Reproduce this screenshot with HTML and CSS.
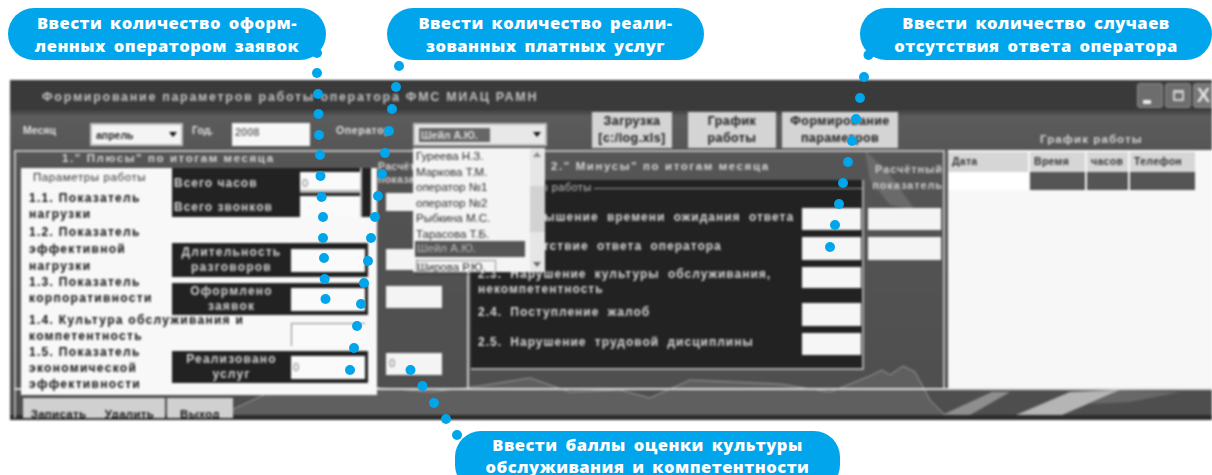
FILE: index.html
```html
<!DOCTYPE html>
<html lang="ru">
<head>
<meta charset="utf-8">
<title>Формирование параметров работы оператора</title>
<link rel="stylesheet" href="styles.css">
</head>
<body>
<div class="page">
  <header class="callouts">
    <div class="callout callout-a">Ввести количество оформ-<br>ленных оператором заявок</div>
    <div class="callout callout-b">Ввести количество реали-<br>зованных платных услуг</div>
    <div class="callout callout-c">Ввести количество случаев<br>отсутствия ответа оператора</div>
  </header>

  <main class="window">
    <svg class="backdrop" viewBox="0 0 1202 340" width="1202" height="340" aria-hidden="true">
      <path class="ridge" d="M200 340 L260 312 L340 305 L420 312 L470 306 L520 298 L560 312 L610 310 L640 318 L680 300 L770 304 L820 312 L860 296 L872 290 L880 295 L893 286 L905 292 L920 320 L940 340 Z"/>
      <path class="haze" d="M855 70 L880 95 L905 130 L880 125 L860 100 Z"/>
      <path class="streak" d="M932 335 L982 312 L1000 312 L960 335 Z"/>
      <path class="streak streak-bright" d="M1006 335 L1060 312 L1110 310 L1052 335 Z"/>
      <path class="haze" d="M1110 310 L1170 312 L1120 322 L1080 324 Z"/>
      <rect class="base-band" x="0" y="335" width="1202" height="5"/>
    </svg>

    <div class="titlebar">
      <span class="title-text">Формирование параметров работы оператора ФМС МИАЦ РАМН</span>
      <div class="win-buttons">
        <button class="win-btn"><span class="glyph-min"></span></button>
        <button class="win-btn"><span class="glyph-max"></span></button>
        <button class="win-btn win-close">X</button>
      </div>
    </div>

    <div class="toolbar">
      <span class="tool-label label-month">Месяц</span>
      <div class="combo combo-month"><span>апрель</span><i class="arrow"></i></div>
      <span class="tool-label label-year">Год.</span>
      <div class="year-input">2008</div>
      <span class="tool-label label-operator">Оператор</span>
      <div class="combo combo-operator"><span class="picked">Шейл А.Ю.</span><i class="arrow"></i></div>
      <button class="tool-btn btn-load">Загрузка<br>[c:/log.xls]</button>
      <button class="tool-btn btn-plan">График<br>работы</button>
      <button class="tool-btn btn-form">Формирование<br>параметров</button>
      <span class="plan-caption">График работы</span>
    </div>

    <div class="workspace">
      <div class="frame">
        <section class="plus">
          <h2 class="panel-title">1." Плюсы" по итогам месяца</h2>
          <div class="plus-sheet">
            <div class="params">
              <p class="params-head">Параметры работы</p>
              <p class="param p-11">1.1. Показатель<br>нагрузки</p>
              <p class="param p-12">1.2. Показатель<br>эффективной<br>нагрузки</p>
              <p class="param p-13">1.3. Показатель<br>корпоративности</p>
              <p class="param p-14">1.4. Культура обслуживания и<br>компетентность</p>
              <p class="param p-15">1.5. Показатель<br>экономической<br>эффективности</p>
            </div>
            <div class="values">
              <div class="black-box box-calls">
                <div class="box-row"><span>Всего часов</span><b class="field field-tall">0</b></div>
                <div class="box-row"><span>Всего звонков</span><b class="field field-tall"></b></div>
              </div>
              <div class="black-box box-talk">
                <span class="box-cap">Длительность<br>разговоров</span><b class="field"></b>
              </div>
              <div class="black-box box-orders">
                <span class="box-cap">Оформлено<br>заявок</span><b class="field"></b>
              </div>
              <div class="culture-row"><b class="field field-sunken"></b></div>
              <div class="black-box box-paid">
                <span class="box-cap">Реализовано<br>услуг</span><b class="field field-zero">0</b>
              </div>
            </div>
          </div>
        </section>

        <section class="calc calc-one">
          <h3 class="calc-title">Расчётный<br>показатель</h3>
          <b class="calc-field cf-1"></b>
          <b class="calc-field cf-2"></b>
          <b class="calc-field cf-3"></b>
          <b class="calc-field cf-4">0</b>
        </section>

        <section class="minus">
          <h2 class="panel-title minus-title">2." Минусы" по итогам месяца</h2>
          <div class="minus-group">
            <span class="legend">Параметры работы</span>
            <div class="m-row m-1"><span>2.1. Превышение времени ожидания ответа</span><b class="m-field"></b></div>
            <div class="m-row m-2"><span>2.2. Отсутствие ответа оператора</span><b class="m-field"></b></div>
            <div class="m-row m-3"><span>2.3. Нарушение культуры обслуживания,<br>некомпетентность</span><b class="m-field"></b></div>
            <div class="m-row m-4"><span>2.4. Поступление жалоб</span><b class="m-field"></b></div>
            <div class="m-row m-5"><span>2.5. Нарушение трудовой дисциплины</span><b class="m-field"></b></div>
          </div>
        </section>

        <section class="calc calc-two">
          <h3 class="calc-title">Расчётный<br>показатель</h3>
          <b class="calc-field cf-a"></b>
          <b class="calc-field cf-b"></b>
        </section>
      </div>

      <div class="schedule">
        <div class="sch-grid">
          <span class="sch-head">Дата</span>
          <span class="sch-head">Время</span>
          <span class="sch-head">часов</span>
          <span class="sch-head">Телефон</span>
          <span class="sch-cell sch-light"></span>
          <span class="sch-cell"></span>
          <span class="sch-cell"></span>
          <span class="sch-cell"></span>
        </div>
      </div>
    </div>

    <div class="actions">
      <div class="action-group">
        <button class="action-btn">Записать</button>
        <button class="action-btn">Удалить</button>
      </div>
      <button class="action-btn action-exit">Выход</button>
    </div>

    <ul class="droplist">
      <li>Гуреева Н.З.</li>
      <li>Маркова Т.М.</li>
      <li>оператор №1</li>
      <li>оператор №2</li>
      <li>Рыбкина М.С.</li>
      <li>Тарасова Т.Б.</li>
      <li class="current">Шейл А.Ю.</li>
      <li class="boxed">Широва Р.Ю.</li>
      <li class="scroll"><i class="up"></i><i class="thumb"></i><i class="down"></i></li>
    </ul>
  </main>

  <footer class="callouts-bottom">
    <div class="callout callout-d">Ввести баллы оценки культуры<br>обслуживания и компетентности</div>
  </footer>

  <svg class="dots" viewBox="0 0 1212 475" width="1212" height="475" aria-hidden="true">
    <g class="trail">
      <circle cx="317" cy="53" r="5"/><circle cx="317" cy="73" r="5"/><circle cx="318" cy="94" r="5"/><circle cx="318.500" cy="114" r="5"/><circle cx="319" cy="135" r="5"/><circle cx="320" cy="155" r="5"/><circle cx="320.500" cy="176" r="5"/><circle cx="321.600" cy="197" r="5"/><circle cx="323" cy="217" r="5"/><circle cx="323" cy="238" r="5"/><circle cx="324" cy="258" r="5"/><circle cx="324.700" cy="279" r="5"/><circle cx="325.500" cy="299" r="5"/>
      <circle cx="399" cy="66" r="5"/><circle cx="396" cy="87" r="5"/><circle cx="392" cy="109" r="5"/><circle cx="389" cy="131" r="5"/><circle cx="385" cy="153" r="5"/><circle cx="382" cy="174" r="5"/><circle cx="378" cy="196" r="5"/><circle cx="375" cy="217" r="5"/><circle cx="371" cy="238" r="5"/><circle cx="368" cy="261" r="5"/><circle cx="364" cy="283" r="5"/><circle cx="361" cy="304" r="5"/><circle cx="357" cy="326" r="5"/><circle cx="354" cy="348" r="5"/><circle cx="350" cy="370" r="5"/>
      <circle cx="868.500" cy="55" r="5"/><circle cx="864" cy="77" r="5"/><circle cx="860" cy="98" r="5"/><circle cx="856" cy="119" r="5"/><circle cx="852" cy="141" r="5"/><circle cx="848" cy="162" r="5"/><circle cx="843" cy="183" r="5"/><circle cx="839" cy="204" r="5"/><circle cx="835" cy="225" r="5"/><circle cx="830" cy="247" r="5"/>
      <circle cx="410.500" cy="370" r="5"/><circle cx="422.500" cy="386" r="5"/><circle cx="434" cy="403" r="5"/><circle cx="446" cy="419" r="5"/><circle cx="457" cy="435" r="5"/>
    </g>
  </svg>
</div>
</body>
</html>
```

FILE: styles.css
```css
* { box-sizing: border-box; }

html, body {
  margin: 0;
  padding: 0;
  background: #fff;
}

.page {
  position: relative;
  width: 1212px;
  height: 475px;
  overflow: hidden;
  font-family: "Liberation Sans", Arial, sans-serif;
}

/* Blue speech pills */
.callouts {
  display: flex;
  height: 60px;
  padding: 8px 0 0 8px;
}

.callout {
  height: 52px;
  border-radius: 26px;
  background: #00a5ec;
  color: #fff;
  font-family: "Open Sans", sans-serif;
  font-weight: 800;
  font-size: 16.500px;
  line-height: 23px;
  letter-spacing: .5px;
  word-spacing: 3px;
  text-align: center;
  padding-top: 3px;
  white-space: nowrap;
}

.callout-a { width: 318px; }
.callout-b { width: 317px; margin-left: 61px; }
.callout-c { width: 352px; margin-left: 156px; }

.callouts-bottom {
  padding: 11px 0 0 455px;
}

.callout-d {
  width: 385px;
  height: 60px;
  line-height: 22px;
}

.dots {
  position: absolute;
  top: 0;
  left: 0;
  pointer-events: none;
}

.trail circle { fill: #00a5ec; }

/* Application window */
.window {
  position: relative;
  width: 1202px;
  height: 340px;
  margin: 20px 0 0 10px;
  overflow: hidden;
  background: linear-gradient(#3a3a3a 0, #3a3a3a 30px, #5c5c5c 36px, #565656 70px, #4e4e4e 100%);
  filter: blur(.8px);
  font-size: 11px;
}

.backdrop {
  position: absolute;
  top: 0;
  left: 0;
}

.ridge {
  fill: #6a6a6a;
  fill-opacity: .6;
  stroke: #a8a8a8;
  stroke-width: .8;
}

.haze { fill: #7a7a7a; opacity: .6; }
.streak { fill: #9a9a9a; opacity: .85; }
.streak-bright { fill: #c8c8c8; }
.base-band { fill: #2c2c2c; }

.titlebar,
.toolbar,
.workspace,
.actions {
  position: relative;
}

.titlebar {
  display: flex;
  align-items: flex-start;
  justify-content: space-between;
  height: 32px;
  padding: 3px 0 0 32px;
  border-bottom: 1px solid #4c4c4c;
}

.title-text {
  margin-top: 7px;
  color: #c4c4c4;
  font-weight: 700;
  font-size: 12.500px;
  letter-spacing: 1.700px;
  white-space: nowrap;
}

.win-buttons {
  display: flex;
  gap: 2px;
  width: 75px;
}

.win-btn {
  flex: 0 0 26px;
  height: 25px;
  padding: 0;
  border: 1px solid #8e8e8e;
  border-radius: 3px;
  background: #6d6d6d;
  color: #e4e4e4;
  font: 700 20px "Liberation Sans", sans-serif;
  display: flex;
  justify-content: center;
  align-items: center;
}

.win-close { flex-basis: 21px; background: #777; }

.glyph-min {
  width: 8px;
  height: 4px;
  margin: 12px 6px 0 0;
  background: #eee;
}

.glyph-max {
  width: 11px;
  height: 11px;
  border: 2px solid #cfcfcf;
  border-top-width: 3px;
}

/* Controls row */
.toolbar {
  display: flex;
  align-items: flex-start;
  height: 38px;
  padding-left: 13px;
}

.tool-label {
  margin-top: 12px;
  color: #e2e2e2;
  font-weight: 700;
  font-size: 10.500px;
  white-space: nowrap;
}

.label-month { flex: 0 0 67px; }
.label-year { flex: 0 0 40px; margin-left: 9px; }
.label-operator { flex: 0 0 77px; margin-left: 26px; letter-spacing: .6px; }

.combo {
  display: flex;
  align-items: center;
  justify-content: space-between;
  height: 23px;
  margin-top: 11px;
  padding: 0 4px;
  background: #f4f4f4;
  border: 2px solid #bdbdbd;
  color: #222;
  font-size: 10.500px;
  font-weight: 700;
}

.combo-month { flex: 0 0 93px; }
.combo-operator { flex: 0 0 134px; background: #e8e8e8; }

.picked {
  background: #666;
  color: #ddd;
  padding: 1px 12px 1px 2px;
}

.arrow {
  width: 0;
  height: 0;
  border-left: 4px solid transparent;
  border-right: 4px solid transparent;
  border-top: 5px solid #111;
}

.year-input {
  flex: 0 0 78px;
  height: 23px;
  margin-top: 11px;
  padding: 3px 0 0 3px;
  background: #f7f7f7;
  color: #777;
  font-size: 11px;
  font-weight: 700;
}

.tool-btn {
  height: 36px;
  padding: 0;
  border: 0;
  background: #d4d4d4;
  color: #1c1c1c;
  font: 700 12.500px/17px "Liberation Sans", sans-serif;
  letter-spacing: .4px;
  white-space: nowrap;
}

.btn-load { flex: 0 0 80px; margin-left: 45px; }
.btn-plan { flex: 0 0 88px; margin-left: 16px; }
.btn-form { flex: 0 0 116px; margin-left: 6px; }

.plan-caption {
  margin: 21px 0 0 142px;
  color: #d6d6d6;
  font-weight: 700;
  font-size: 11.500px;
  letter-spacing: 1.100px;
  white-space: nowrap;
}

/* Main area */
.workspace {
  display: flex;
  height: 240px;
  margin-left: 4px;
  border-bottom: 2px solid #dedede;
}

.frame {
  display: flex;
  flex: 0 0 931px;
  height: 238px;
  border: 2px solid #b9b9b9;
  border-bottom: 0;
}

.plus {
  flex: 0 0 356px;
  min-width: 0;
  margin-left: 5px;
}

.panel-title {
  height: 16px;
  margin: 0;
  padding: 0 0 0 41px;
  color: #d8d8d8;
  font-size: 11.500px;
  font-weight: 700;
  letter-spacing: 1.600px;
  white-space: nowrap;
}

.plus-sheet {
  position: relative;
  display: flex;
  height: 227px;
  background: #f8f8f8;
}

.params {
  flex: 0 0 151px;
  min-width: 0;
  padding: 1px 0 0 8px;
  color: #111;
  font-size: 12px;
  font-weight: 700;
  line-height: 16px;
  letter-spacing: 1.300px;
  white-space: nowrap;
}

.params p { margin: 0; }

.params .params-head {
  padding-left: 4px;
  font-size: 11.500px;
  font-weight: 400;
  letter-spacing: .6px;
  color: #333;
}

.params .p-11 { margin-top: 5px; }
.params .p-12 { margin-top: 2px; line-height: 17px; }
.params .p-13 { line-height: 15.500px; }
.params .p-14 { margin-top: 6px; }

.values {
  flex: 1;
  min-width: 0;
  display: flex;
  flex-direction: column;
}

.black-box {
  display: flex;
  align-items: center;
  justify-content: space-between;
  width: 196px;
  background: #222;
  color: #d4d4d4;
  font-weight: 700;
  font-size: 12px;
  letter-spacing: 1px;
  padding-right: 3px;
}

.box-calls {
  display: block;
  width: 199px;
  height: 49px;
  padding: 4px 11px 0 0;
  background: linear-gradient(90deg, #222 0 188px, #bbb 188px 190px, #222 190px);
  white-space: nowrap;
}

.box-row {
  display: flex;
  justify-content: space-between;
  align-items: center;
  height: 21px;
  padding-left: 2px;
}

.box-row + .box-row {
  margin-top: 3px;
}

.box-row .field {
  border-bottom: 3px solid #b4b4b4;
}

.box-row + .box-row .field {
  border-bottom: 0;
}

.box-talk { height: 34px; margin-top: 26px; }
.box-orders { height: 32px; margin-top: 6px; }
.box-paid { height: 32px; margin-top: 6px; }

.box-cap {
  flex: 1;
  min-width: 0;
  text-align: center;
  line-height: 15px;
  font-size: 12px;
  letter-spacing: 1.200px;
  white-space: nowrap;
}

.field {
  display: block;
  flex: 0 0 74px;
  height: 23px;
  padding: 5px 0 0 2px;
  background: #fafafa;
  color: #777;
  font-weight: 400;
  font-size: 11px;
}

.field-tall { flex-basis: 60px; height: 21px; }

.culture-row {
  display: flex;
  justify-content: flex-end;
  width: 193px;
  height: 22px;
  margin-top: 8px;
}

.field-sunken {
  border-top: 1px solid #888;
  border-left: 1px solid #888;
}

/* Calculated columns */
.calc {
  position: relative;
  min-width: 0;
}

.calc-one {
  flex: 0 0 89px;
  margin-left: 3px;
  background: rgba(80, 80, 80, .55);
  border-right: 2px solid #c8c8c8;
}

.calc-two { flex: 0 0 79px; }

.calc-title {
  margin: 0;
  padding-top: 8px;
  color: #cfcfcf;
  font-size: 10.500px;
  line-height: 13px;
  letter-spacing: .3px;
  font-weight: 700;
  white-space: nowrap;
}

.calc-one .calc-title { margin-left: -2px; }

.calc-two .calc-title {
  padding: 9px 0 0 0;
  margin-left: -6px;
  line-height: 16px;
  font-size: 11px;
  letter-spacing: .9px;
  text-align: right;
}

.calc-field {
  display: block;
  height: 22px;
  background: #f4f4f4;
  color: #777;
  font-weight: 400;
  padding: 4px 0 0 3px;
}

.calc-one .calc-field { width: 56px; margin-left: 6px; }
.calc-two .calc-field { width: 73px; margin-left: 4px; }

.cf-1 { margin-top: 7px; height: 18px; }
.cf-2 { margin-top: 38px; height: 21px; }
.cf-3 { margin-top: 16px; }
.cf-4 { margin-top: 45px; }
.cf-a { margin-top: 15px; }
.cf-b { margin-top: 7px; height: 23px; }

/* Second panel */
.minus {
  flex: 0 0 393px;
  min-width: 0;
  margin-left: 2px;
}

.minus-title {
  height: 28px;
  padding: 8px 0 0 80px;
}

.minus-group {
  position: relative;
  height: 190px;
  padding-top: 28px;
  background: #222;
  border-right: 2px solid #a8a8a8;
  border-bottom: 2px solid #a8a8a8;
}

.minus-group::before {
  content: "";
  position: absolute;
  top: 8px;
  left: 4px;
  right: 0;
  height: 1px;
  background: #9a9a9a;
}

.legend {
  position: absolute;
  top: 1px;
  left: 12px;
  padding: 0 3px;
  background: #222;
  color: #c4c4c4;
  font-size: 11px;
  letter-spacing: .4px;
}

.m-row {
  display: flex;
  justify-content: space-between;
  align-items: flex-start;
  color: #d8d8d8;
  font-weight: 700;
  font-size: 12px;
  line-height: 15px;
  letter-spacing: 1px;
  word-spacing: 4px;
  padding-left: 7px;
  white-space: nowrap;
}

.m-row span { padding-top: 2px; min-width: 0; }
.m-3 span { padding-top: 0; }

.m-field {
  flex: 0 0 59px;
  height: 22px;
  margin-right: 1px;
  background: #f6f6f6;
}

.m-2, .m-3, .m-5 { margin-top: 7px; }
.m-4 { margin-top: 6px; }
.m-2 .m-field, .m-4 .m-field { height: 23px; }
.m-3 .m-field { height: 21px; }

/* Schedule grid */
.schedule {
  flex: 1;
  min-width: 0;
  margin-left: 3px;
  background: #f7f7f7;
  height: 238px;
}

.sch-grid {
  display: grid;
  grid-template-columns: 80px 55px 41px 65px;
  grid-template-rows: 20px 18px;
  column-gap: 2px;
  padding-top: 2px;
}

.sch-head {
  background: #d6d6d6;
  color: #333;
  font-size: 10.500px;
  font-weight: 700;
  letter-spacing: .3px;
  padding: 3px 0 0 4px;
  overflow: hidden;
  white-space: nowrap;
}

.sch-cell { background: #555; }
.sch-light { background: #fff; }

/* Bottom buttons */
.actions {
  display: flex;
  gap: 2px;
  height: 28px;
  margin-left: 4px;
  padding: 8px 0 0 7px;
  overflow: hidden;
  border-left: 2px solid #a8a8a8;
}

.action-group { display: flex; }

.action-btn {
  width: 71px;
  height: 26px;
  padding: 6px 0 0;
  border: 0;
  background: #d0d0d0;
  color: #111;
  font: 700 11.500px "Liberation Sans", sans-serif;
  letter-spacing: .3px;
  text-align: center;
  align-self: flex-start;
}

.action-exit { width: 66px; }

/* Open operator dropdown */
.droplist {
  position: absolute;
  top: 68px;
  left: 403px;
  width: 132px;
  height: 124px;
  margin: 0;
  padding: 1px 0 0 3px;
  list-style: none;
  background: #f4f4f4;
  color: #2a2a2a;
  font-size: 11.500px;
  line-height: 15.500px;
}

.droplist .current {
  width: 110px;
  height: 16px;
  margin-top: -1px;
  margin-left: -1px;
  padding-left: 2px;
  background: #555;
  color: #bbb;
}

.droplist .boxed {
  width: 80px;
  margin-top: 3px;
  border: 1px dotted #333;
  line-height: 13px;
}

.droplist .scroll {
  position: absolute;
  top: 0;
  right: 0;
  bottom: 0;
  width: 15px;
  background: #e6e6e6;
}

.scroll i { display: block; position: absolute; left: 3px; }

.scroll .up {
  top: 4px;
  border-left: 4px solid transparent;
  border-right: 4px solid transparent;
  border-bottom: 5px solid #888;
}

.scroll .thumb {
  top: 38px;
  left: 0;
  width: 15px;
  height: 46px;
  background: #d2d2d2;
}

.scroll .down {
  bottom: 5px;
  border-left: 4px solid transparent;
  border-right: 4px solid transparent;
  border-top: 5px solid #666;
}
```
